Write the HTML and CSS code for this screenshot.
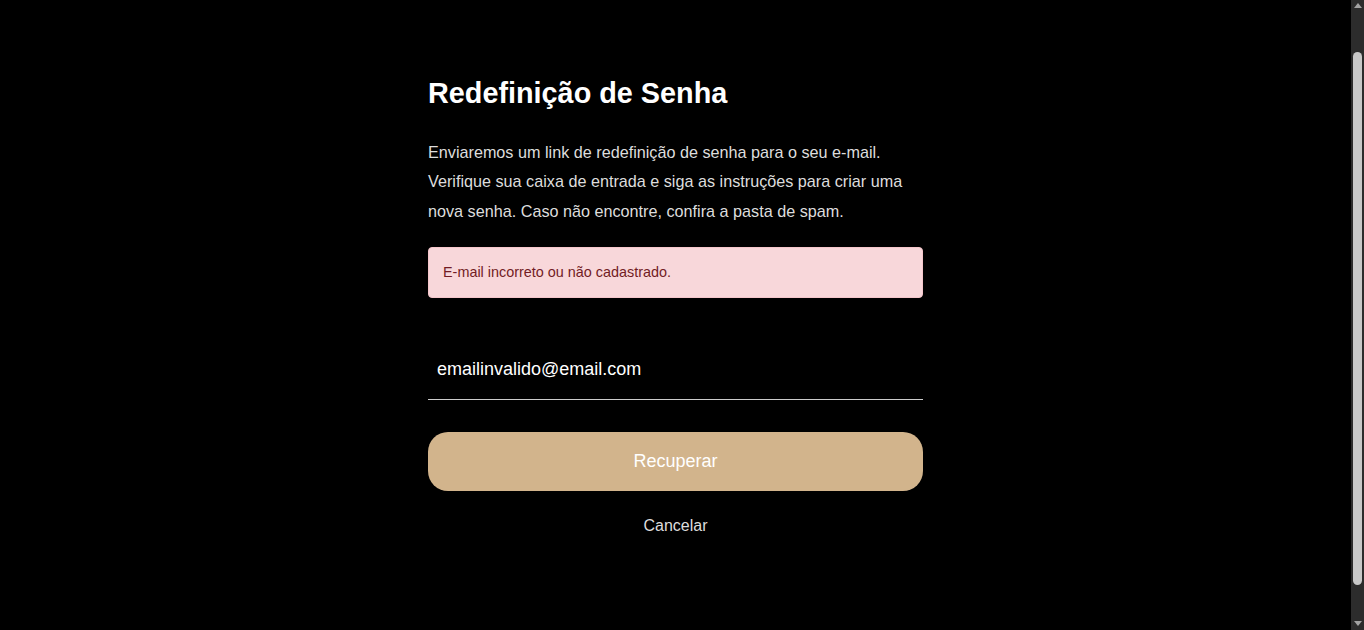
FILE: index.html
```html
<!DOCTYPE html>
<html lang="pt-BR">
<head>
<meta charset="utf-8">
<title>Redefinição de Senha</title>
<link rel="stylesheet" href="styles.css">
</head>
<body>
<main class="page">
  <section class="reset">
    <h1 class="reset__title">Redefinição de Senha</h1>
    <p class="reset__text">Enviaremos um link de redefinição de senha para o seu e-mail. Verifique sua caixa de entrada e siga as instruções para criar uma nova senha. Caso não encontre, confira a pasta de spam.</p>
    <div class="alert">E-mail incorreto ou não cadastrado.</div>
    <form class="reset__form">
      <input class="reset__input" type="email" value="emailinvalido@email.com">
      <button class="reset__button" type="button">Recuperar</button>
      <a class="reset__cancel" href="#">Cancelar</a>
    </form>
  </section>
</main>
<div class="scrollbar" aria-hidden="true">
  <span class="scrollbar__arrow scrollbar__arrow--up"></span>
  <span class="scrollbar__track"><span class="scrollbar__thumb"></span></span>
  <span class="scrollbar__arrow scrollbar__arrow--down"></span>
</div>
</body>
</html>
```

FILE: styles.css
```css
html {
  background: #000;
}
body {
  margin: 0;
  background: #000;
  font-family: "Liberation Sans", Arial, sans-serif;
  color: #ddd;
}
.page {
  display: flex;
  justify-content: center;
  padding: 76px 15px 0 2px;
}
.reset {
  width: 495px;
  display: flex;
  flex-direction: column;
}
.reset__title {
  margin: 0;
  font-size: 28.8px;
  line-height: 1.2;
  font-weight: 700;
  color: #fff;
}
.reset__text {
  margin: 27px 0 0;
  font-size: 16.2px;
  line-height: 29.6px;
  color: #ddd;
}
.alert {
  margin-top: 21px;
  padding: 14px 14px;
  border: 1px solid #f5c6cb;
  border-radius: 4px;
  background: #f8d7da;
  color: #721c24;
  font-size: 14.4px;
  line-height: 21px;
}
.reset__form {
  display: flex;
  flex-direction: column;
  margin-top: 42px;
}
.reset__input {
  box-sizing: border-box;
  height: 60px;
  padding: 0 9px;
  border: 0;
  border-bottom: 1px solid #ccc;
  background: transparent;
  color: #fff;
  font-family: "Liberation Sans", Arial, sans-serif;
  font-size: 18px;
  outline: none;
}
.reset__button {
  margin-top: 32px;
  height: 59px;
  border: 0;
  border-radius: 20px;
  background: #d2b48c;
  color: #fff;
  font-family: "Liberation Sans", Arial, sans-serif;
  font-size: 18px;
  cursor: pointer;
}
.reset__cancel {
  margin-top: 26px;
  align-self: center;
  font-size: 16px;
  line-height: 18px;
  color: #ddd;
  text-decoration: none;
}

/* browser scrollbar drawn over the right edge */
.scrollbar {
  position: fixed;
  top: 0;
  right: 0;
  bottom: 0;
  width: 13px;
  border-left: 2px solid #000;
  background: #2c2c2c;
  display: flex;
  flex-direction: column;
  align-items: center;
}
.scrollbar__arrow {
  flex: 0 0 15px;
  display: flex;
  justify-content: center;
}
.scrollbar__arrow--up::before,
.scrollbar__arrow--down::before {
  content: "";
  width: 0;
  height: 0;
  border-left: 4px solid transparent;
  border-right: 4px solid transparent;
}
.scrollbar__arrow--up {
  align-items: flex-start;
  padding-top: 3px;
  box-sizing: border-box;
}
.scrollbar__arrow--up::before {
  border-bottom: 5px solid #a3a3a3;
}
.scrollbar__arrow--down {
  align-items: flex-end;
  padding-bottom: 4px;
  box-sizing: border-box;
}
.scrollbar__arrow--down::before {
  border-top: 5px solid #a3a3a3;
}
.scrollbar__track {
  flex: 1;
  width: 100%;
  display: flex;
  justify-content: center;
  padding-top: 37px;
  padding-bottom: 30px;
  box-sizing: border-box;
}
.scrollbar__thumb {
  width: 9px;
  height: 100%;
  border-radius: 5px;
  background: #c8c8c8;
}
```
